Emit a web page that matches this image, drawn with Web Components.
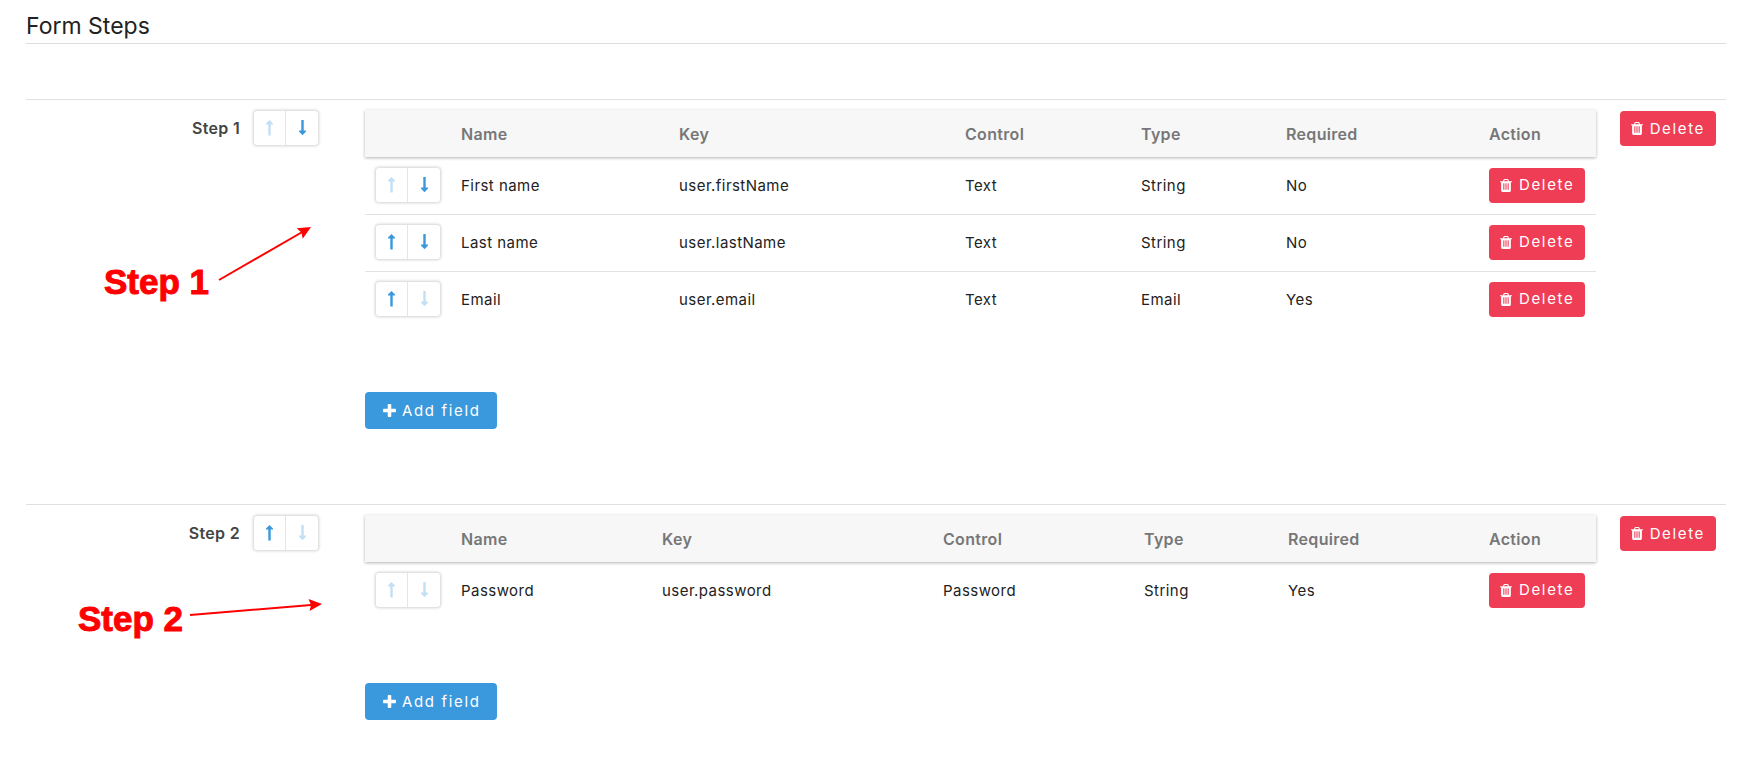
<!DOCTYPE html>
<html lang="en">
<head>
<meta charset="utf-8">
<title>Form Steps</title>
<style>
  body { margin: 0; background: #fff; color: #222; font: 15px/20px Inter, "Open Sans", sans-serif; letter-spacing: 0.03em; }
</style>
</head>
<body>
<form-page>
  <span slot="title">Form Steps</span>
  <form-step label="Step 1" move="down" columns="86,218,286,176,145,203,117"
    fields='[["down","First name","user.firstName","Text","String","No"],["both","Last name","user.lastName","Text","String","No"],["up","Email","user.email","Text","Email","Yes"]]'>
    <step-note slot="note" x1="115" y1="79" x2="207" y2="26" style="left:78px;top:101px;--text-top:60px">Step 1</step-note>
  </form-step>
  <form-step label="Step 2" move="up" columns="86,201,281,201,144,201,117"
    fields='[["none","Password","user.password","Password","String","Yes"]]'>
    <step-note slot="note" x1="112" y1="20" x2="244" y2="9" style="left:52px;top:90px;--text-top:3px">Step 2</step-note>
  </form-step>
</form-page>

<script>
const TRASH = '<svg viewBox="192 128 1408 1536" width="12" height="13" aria-hidden="true"><path fill="currentColor" d="M704 1376v-704q0-14-9-23t-23-9h-64q-14 0-23 9t-9 23v704q0 14 9 23t23 9h64q14 0 23-9t9-23zm256 0v-704q0-14-9-23t-23-9h-64q-14 0-23 9t-9 23v704q0 14 9 23t23 9h64q14 0 23-9t9-23zm256 0v-704q0-14-9-23t-23-9h-64q-14 0-23 9t-9 23v704q0 14 9 23t23 9h64q14 0 23-9t9-23zm-544-992h448l-48-117q-7-9-17-11h-317q-10 2-17 11zm928 32v64q0 14-9 23t-23 9h-96v948q0 83-47 143.5t-113 60.5h-832q-66 0-113-58.5t-47-141.5v-952h-96q-14 0-23-9t-9-23v-64q0-14 9-23t23-9h309l70-167q15-37 54-63t79-26h320q40 0 79 26t54 63l70 167h309q14 0 23 9t9 23z"/></svg>';
const PLUS = '<svg viewBox="192 128 1408 1408" width="13" height="13" aria-hidden="true"><path fill="currentColor" d="M1600 736v192q0 40-28 68t-68 28h-416v416q0 40-28 68t-68 28h-192q-40 0-68-28t-28-68v-416h-416q-40 0-68-28t-28-68v-192q0-40 28-68t68-28h416v-416q0-40 28-68t68-28h192q40 0 68 28t28 68v416h416q40 0 68 28t28 68z"/></svg>';

class BaseElement extends HTMLElement {
  connectedCallback() {
    if (this.shadowRoot) return;
    this.attachShadow({ mode: 'open' }).innerHTML = this.render();
  }
}

customElements.define('form-page', class extends BaseElement {
  render() {
    return `<style>
      :host { display: block; padding: 8px 24px 0 26px; }
      h1 { margin: 0 0 55px; height: 35px; border-bottom: 1px solid #ddd; font-size: 23px; line-height: 36px; font-weight: 400; letter-spacing: 0; }
    </style>
    <h1><slot name="title"></slot></h1>
    <main><slot></slot></main>`;
  }
});

customElements.define('action-button', class extends BaseElement {
  render() {
    const add = this.getAttribute('kind') === 'add';
    return `<style>
      :host { display: inline-block; vertical-align: top; }
      button { display: flex; align-items: center; gap: 7px; height: 35px; margin: 0; padding: 0 11px; border: 0; border-radius: 4px;
        background: #ee3d54; color: #fff; font: inherit; letter-spacing: 0.11em; white-space: nowrap; cursor: pointer; }
      button.add { gap: 6px; height: 37px; padding: 0 16px 0 18px; background: #3a98dc; }
      svg { display: block; flex: none; }
    </style>
    <button type="button" class="${add ? 'add' : 'delete'}">${add ? PLUS : TRASH}<span><slot></slot></span></button>`;
  }
});

customElements.define('move-buttons', class extends BaseElement {
  render() {
    const m = this.getAttribute('move');
    const up = m === 'up' || m === 'both', down = m === 'down' || m === 'both';
    return `<style>
      :host { display: inline-flex; vertical-align: top; border-radius: 3px; background: #fff; box-shadow: 0 0 3px 1px rgba(0,0,0,.18); }
      button { display: flex; align-items: center; justify-content: center; width: 32px; height: 34px; margin: 0; padding: 0; border: 0; background: none; color: #3a98dc; cursor: pointer; }
      button:first-of-type { border-right: 1px solid #e5e5e5; }
      button:disabled { color: #c3dff4; cursor: default; }
      svg { display: block; flex: none; }
    </style>
    <button type="button" aria-label="Move up" ${up ? '' : 'disabled'}><svg width="7" height="16" viewBox="0 0 7 16"><path fill="currentColor" d="M3.5 0 7 3.6V4.6H4.7V15.5H2.3V4.6H0V3.6Z"/></svg></button>
    <button type="button" aria-label="Move down" ${down ? '' : 'disabled'}><svg width="7" height="16" viewBox="0 0 7 16"><path fill="currentColor" d="M3.5 15.2 0 11.6V10.6H2.3V0H4.7V10.6H7V11.6Z"/></svg></button>`;
  }
});

customElements.define('field-table', class extends BaseElement {
  render() {
    const cols = this.getAttribute('columns').split(',').map(w => `<col style="width:${w}px">`).join('');
    const rows = JSON.parse(this.getAttribute('fields')).map(([move, ...cells]) =>
      `<tr><td class="move"><move-buttons move="${move}"></move-buttons></td>${cells.map(c => `<td>${c}</td>`).join('')}<td class="action"><action-button>Delete</action-button></td></tr>`).join('');
    return `<style>
      :host { display: block; }
      table { width: 100%; table-layout: fixed; border-collapse: separate; border-spacing: 0; text-align: left; }
      thead { box-shadow: 0 1px 3px rgba(0,0,0,.3); }
      th { height: 47px; padding: 0 10px; background: #f7f7f7; color: #777; font-size: 16px; font-weight: 600; letter-spacing: 0.02em; }
      td { height: 57px; box-sizing: border-box; padding: 0 10px; border-top: 1px solid #e2e2e2; }
      td.move { padding: 0 0 2px 11px; }
      td.action { padding-bottom: 2px; }
      tbody tr:first-child td { border-top-color: transparent; }
    </style>
    <table><colgroup>${cols}</colgroup>
      <thead><tr><th></th><th>Name</th><th>Key</th><th>Control</th><th>Type</th><th>Required</th><th>Action</th></tr></thead>
      <tbody>${rows}</tbody></table>`;
  }
});

customElements.define('form-step', class extends BaseElement {
  render() {
    return `<style>
      :host { display: block; position: relative; border-top: 1px solid #e0e0e0; }
      .row { display: grid; grid-template-columns: 339fr 1231fr 130px; padding: 10px 0 75px; }
      .label { display: flex; justify-content: flex-end; align-items: flex-start; gap: 14px; padding: 1px 47px 0 0; }
      h2 { margin: 0; font-size: 16px; line-height: 34px; font-weight: 600; letter-spacing: 0.02em; color: #444; }
      .fields { display: grid; gap: 64px; justify-items: start; }
      field-table { width: 100%; }
      .actions { padding: 1px 10px 0 0; text-align: right; }
    </style>
    <section class="row">
      <div class="label"><h2>${this.getAttribute('label')}</h2><move-buttons move="${this.getAttribute('move')}"></move-buttons></div>
      <div class="fields">
        <field-table columns="${this.getAttribute('columns')}" fields='${this.getAttribute('fields')}'></field-table>
        <action-button kind="add">Add field</action-button>
      </div>
      <div class="actions"><action-button>Delete</action-button></div>
    </section>
    <slot name="note"></slot>`;
  }
});

customElements.define('step-note', class extends BaseElement {
  render() {
    const [x1, y1, x2, y2] = ['x1', 'y1', 'x2', 'y2'].map(k => +this.getAttribute(k));
    const angle = Math.atan2(y2 - y1, x2 - x1) * 180 / Math.PI;
    const length = Math.hypot(x2 - x1, y2 - y1);
    return `<style>
      :host { display: block; position: absolute; pointer-events: none; color: #f00; }
      span { display: block; padding-top: var(--text-top); font: bold 35px/42px "Liberation Sans", Arial, sans-serif; letter-spacing: 0; white-space: nowrap; -webkit-text-stroke: 1px #f00; }
      svg { position: absolute; top: 0; left: 0; overflow: visible; }
    </style>
    <span><slot></slot></span>
    <svg width="250" height="90" aria-hidden="true"><g transform="translate(${x1} ${y1}) rotate(${angle})">
      <path d="M0 0H${length - 8}" stroke="#f00" stroke-width="2"/>
      <path d="M${length} 0l-13 -6 2 6 -2 6z" fill="#f00"/></g></svg>`;
  }
});
</script>
</body>
</html>
